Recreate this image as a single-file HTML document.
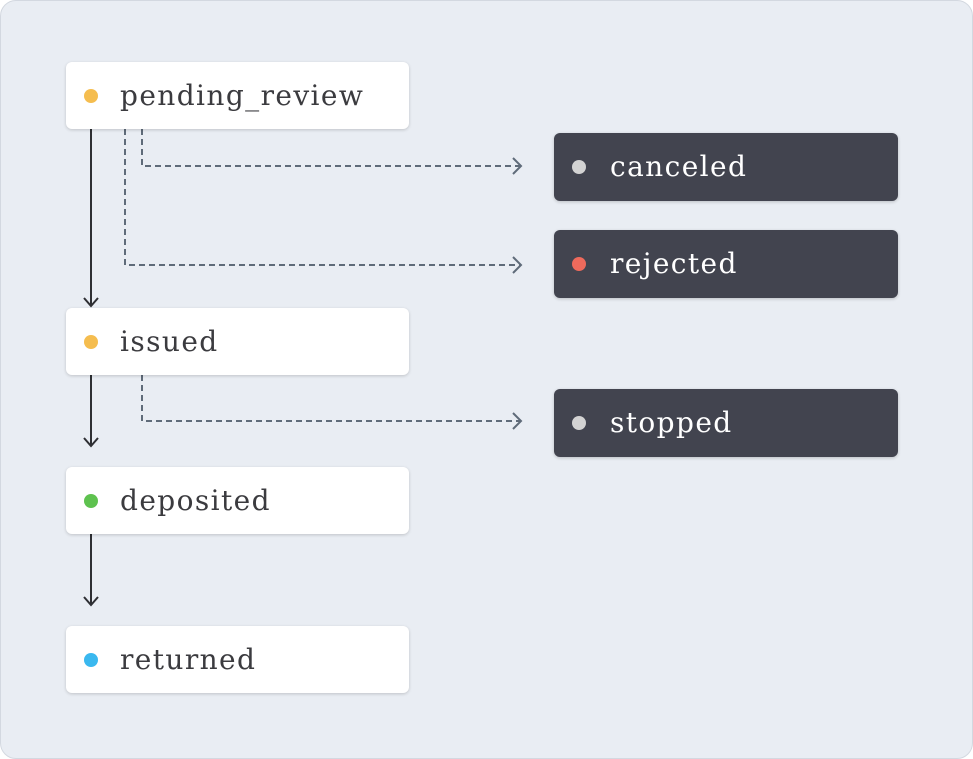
<html><head><style>
body{margin:0;width:973px;height:759px;background:#fff;font-family:"DejaVu Serif","Liberation Serif",serif;}
.wrap{position:absolute;left:0;top:0;width:971px;height:757px;background:#e9edf3;border:1px solid #d3d8e0;border-radius:16px;}
.b{position:absolute;left:66px;width:343px;height:67px;background:#fff;border-radius:6px;box-shadow:0 1px 3px rgba(0,0,0,.18);box-sizing:border-box;}
.d{position:absolute;left:554px;width:344px;height:68px;background:#42444f;border-radius:6px;box-shadow:0 1px 3px rgba(0,0,0,.2);}
.dot{position:absolute;left:18px;top:27px;width:14px;height:14px;border-radius:50%;}
.t{position:absolute;left:54px;top:16px;font-size:28px;line-height:36px;color:#3b3b3f;letter-spacing:1.4px;}
.d .t{color:#fff;left:56px;}
svg{position:absolute;left:0;top:0;}
</style></head><body>
<div class="wrap"></div>
<svg width="973" height="759">
<g stroke="#2e2f33" stroke-width="2" fill="none">
<path d="M91 129V306M84 298l7 8 7-8"/>
<path d="M91 375V446M84 438l7 8 7-8"/>
<path d="M91 534V605M84 597l7 8 7-8"/>
</g>
<g stroke="#5f6b79" stroke-width="2" fill="none" stroke-dasharray="6 4">
<path d="M142 129V166H521"/>
<path d="M125 129V265H521"/>
<path d="M142 375V421H521"/>
</g>
<g stroke="#5f6b79" stroke-width="2" fill="none">
<path d="M513 158l8 8-8 8M513 257l8 8-8 8M513 413l8 8-8 8"/>
</g>
</svg>
<div class="b" style="top:62px"><div class="dot" style="background:#f5bd4f"></div><div class="t">pending_review</div></div>
<div class="b" style="top:308px"><div class="dot" style="background:#f5bd4f"></div><div class="t">issued</div></div>
<div class="b" style="top:467px"><div class="dot" style="background:#5ec24f"></div><div class="t">deposited</div></div>
<div class="b" style="top:626px"><div class="dot" style="background:#3ab8ef"></div><div class="t">returned</div></div>
<div class="d" style="top:133px"><div class="dot" style="background:#d3d3d3"></div><div class="t">canceled</div></div>
<div class="d" style="top:230px"><div class="dot" style="background:#ee6a5c"></div><div class="t">rejected</div></div>
<div class="d" style="top:389px"><div class="dot" style="background:#d3d3d3"></div><div class="t">stopped</div></div>
</body></html>
